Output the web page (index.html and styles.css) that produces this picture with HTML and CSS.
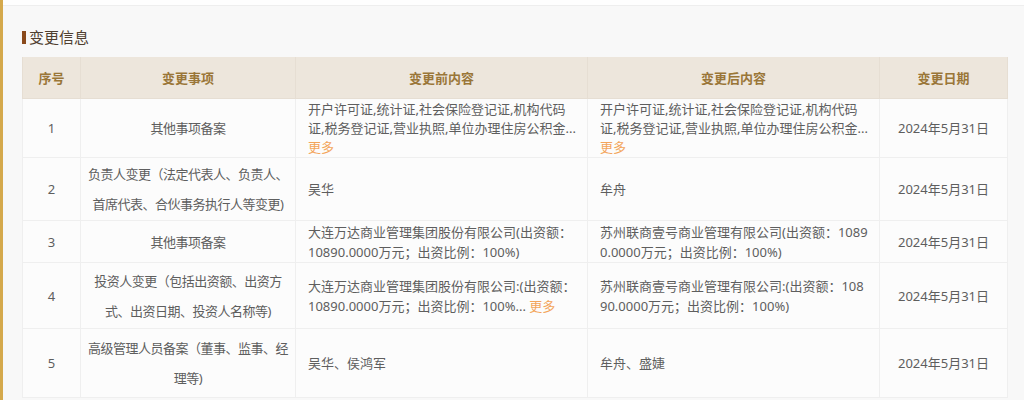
FILE: index.html
```html
<!DOCTYPE html>
<html lang="zh-CN">
<head>
<meta charset="utf-8">
<link rel="stylesheet" href="styles.css">
</head>
<body>
<div class="page">
  <div class="topstrip"></div>
  <div class="section">
    <h2 class="title"><span class="mark"></span>变更信息</h2>
    <table class="tbl">
      <colgroup>
        <col class="c1"><col class="c2"><col class="c3"><col class="c4"><col class="c5">
      </colgroup>
      <thead>
        <tr><th>序号</th><th>变更事项</th><th>变更前内容</th><th>变更后内容</th><th>变更日期</th></tr>
      </thead>
      <tbody>
        <tr class="r1">
          <td class="num">1</td>
          <td class="item">其他事项备案</td>
          <td class="txt">开户许可证,统计证,社会保险登记证,机构代码证,税务登记证,营业执照,单位办理住房公积金...<a class="more">更多</a></td>
          <td class="txt">开户许可证,统计证,社会保险登记证,机构代码证,税务登记证,营业执照,单位办理住房公积金...<a class="more">更多</a></td>
          <td class="date">2024年5月31日</td>
        </tr>
        <tr class="r2">
          <td class="num">2</td>
          <td class="item">负责人变更（法定代表人、负责人、首席代表、合伙事务执行人等变更)</td>
          <td class="txt">吴华</td>
          <td class="txt">牟舟</td>
          <td class="date">2024年5月31日</td>
        </tr>
        <tr class="r3">
          <td class="num">3</td>
          <td class="item">其他事项备案</td>
          <td class="txt">大连万达商业管理集团股份有限公司(出资额：10890.0000万元；出资比例：100%)</td>
          <td class="txt">苏州联商壹号商业管理有限公司(出资额：10890.0000万元；出资比例：100%)</td>
          <td class="date">2024年5月31日</td>
        </tr>
        <tr class="r4">
          <td class="num">4</td>
          <td class="item">投资人变更（包括出资额、出资方式、出资日期、投资人名称等)</td>
          <td class="txt">大连万达商业管理集团股份有限公司:(出资额：10890.0000万元；出资比例：100%... <a class="more">更多</a></td>
          <td class="txt">苏州联商壹号商业管理有限公司:(出资额：10890.0000万元；出资比例：100%)</td>
          <td class="date">2024年5月31日</td>
        </tr>
        <tr class="r5">
          <td class="num">5</td>
          <td class="item">高级管理人员备案（董事、监事、经理等)</td>
          <td class="txt">吴华、侯鸿军</td>
          <td class="txt">牟舟、盛婕</td>
          <td class="date">2024年5月31日</td>
        </tr>
      </tbody>
    </table>
  </div>
</div>
</body>
</html>
```
FILE: styles.css
```css
html, body {
  margin: 0;
  padding: 0;
  background: #f8f8f8;
  font-family: "Noto Sans", "Noto Sans CJK SC", "Microsoft YaHei", sans-serif;
}
.page {
  border-left: 3px solid #d5a94c;
  min-height: 400px;
  box-sizing: border-box;
}
.topstrip {
  height: 5px;
  background: #fefefe;
  border-bottom: 1px solid #eeeeee;
}
.section {
  padding: 0 16px 0 19px;
}
.title {
  margin: 0 0 6px 0;
  padding-top: 17px;
  height: 28px;
  display: flex;
  align-items: center;
  font-size: 15px;
  font-weight: normal;
  color: #4f3f30;
  line-height: 1;
}
.mark {
  display: inline-block;
  width: 4px;
  height: 13px;
  background: #8a4a1c;
  margin-right: 3px;
}
.tbl {
  width: 985px;
  border-collapse: collapse;
  table-layout: fixed;
  font-size: 13px;
  color: #5e5e5e;
  background: #fcfcfc;
}
.c1 { width: 58px; }
.c2 { width: 215px; }
.c3 { width: 292px; }
.c4 { width: 292px; }
.c5 { width: 128px; }
.tbl th {
  height: 41px;
  padding: 0;
  background: #ede6dc;
  color: #9a7638;
  font-weight: bold;
  font-size: 13px;
  border: 1px solid #e6ded3;
  border-top: none;
}
.tbl td {
  border: 1px solid #efefef;
  padding: 0 10px 0 12px;
  vertical-align: middle;
  line-height: 20px;
}
.tbl td.num, .tbl td.date { text-align: center; padding: 0; }
.tbl td.item {
  text-align: center;
  line-height: 30px;
  padding: 0 5px;
  letter-spacing: -0.5px;
}
.tbl td.txt { word-break: break-all; }
.r1 td.txt { line-height: 19px; }
.r1 .more { display: block; }
.more { color: #f3a55b; cursor: pointer; }
.r1 td { height: 58px; }
.r2 td { height: 62px; }
.r3 td { height: 41px; }
.r4 td { height: 65px; }
.r5 td { height: 68px; }
```
